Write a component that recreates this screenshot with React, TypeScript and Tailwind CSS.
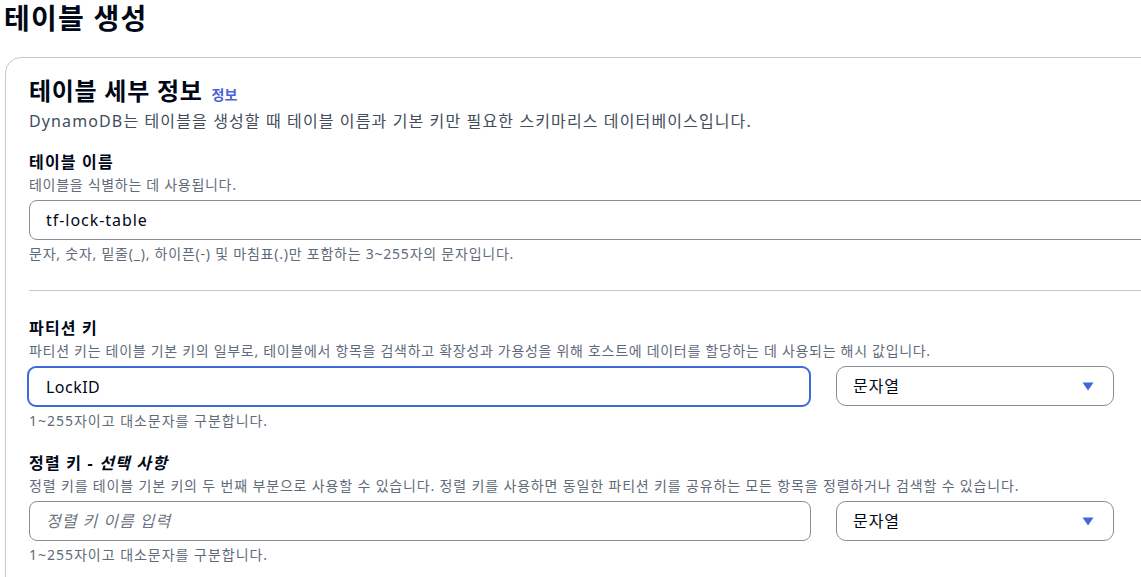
import React from 'react';

const FONT = { fontFamily: '"Noto Sans", "Noto Sans CJK KR", sans-serif' };

const Caret: React.FC = () => (
    <svg width="12" height="9" viewBox="0 0 12 9" className="shrink-0">
        <path d="M0.5 0.5 H11.5 L6 8.5 Z" fill="#3f68d8" />
    </svg>
);

const TypeSelect: React.FC = () => (
    <div className="w-[278px] h-[40px] shrink-0 rounded-[10px] border border-[#8c8c94] flex items-center justify-between pl-4 pr-[19px]">
        <span className="text-[16px] text-[#000716] tracking-[0.06em]">문자열</span>
        <Caret />
    </div>
);

const App: React.FC = () => {
    return (
        <div className="w-full h-[577px] overflow-hidden bg-white text-[#000716]" style={FONT}>
            <h1 className="pl-[4px] text-[28px] leading-[36px] font-bold tracking-[0.045em]">테이블 생성</h1>

            <div className="mt-[21px] ml-[5px] w-[1200px] h-[560px] rounded-2xl border border-[#c6c6cd] pl-[23px] pr-6 pt-[17px]">
                {/* Header */}
                <div className="flex items-baseline gap-[9px]">
                    <h2 className="text-[24px] leading-[32px] font-bold tracking-[0.03em]">테이블 세부 정보</h2>
                    <a href="#" className="text-[14px] font-bold text-[#4a62d8]">정보</a>
                </div>
                <p className="mt-[2px] text-[16px] leading-[24px] text-[#414d5c] tracking-[0.07em]">
                    DynamoDB는 테이블을 생성할 때 테이블 이름과 기본 키만 필요한 스키마리스 데이터베이스입니다.
                </p>

                {/* Table name */}
                <div className="mt-[17px]">
                    <p className="text-[16px] leading-[24px] font-bold tracking-[0.075em]">테이블 이름</p>
                    <p className="mt-[1px] text-[14px] leading-[20px] text-[#5f6b7a] tracking-[0.05em]">테이블을 식별하는 데 사용됩니다.</p>
                    <div className="mt-[5px] h-[40px] rounded-[8px] border border-[#8c8c94] flex items-center px-4">
                        <span className="text-[16px] tracking-[0.06em]">tf-lock-table</span>
                    </div>
                    <p className="mt-[4px] text-[14px] leading-[20px] text-[#5f6b7a] tracking-[0.055em]">
                        문자, 숫자, 밑줄(_), 하이픈(-) 및 마침표(.)만 포함하는 3~255자의 문자입니다.
                    </p>
                </div>

                <div className="mt-[26px] border-t border-[#c6c6cd]" />

                {/* Partition key */}
                <div className="mt-[25px]">
                    <p className="text-[16px] leading-[24px] font-bold tracking-[0.075em]">파티션 키</p>
                    <p className="mt-[1px] text-[14px] leading-[20px] text-[#5f6b7a] tracking-[0.05em]">
                        파티션 키는 테이블 기본 키의 일부로, 테이블에서 항목을 검색하고 확장성과 가용성을 위해 호스트에 데이터를 할당하는 데 사용되는 해시 값입니다.
                    </p>
                    <div className="mt-[5px] flex gap-[25px]">
                        <div className="w-[784px] h-[41px] -ml-[2px] rounded-[9px] border-2 border-[#3f68d8] flex items-center pl-[17px]">
                            <span className="text-[16px] tracking-[0.03em]">LockID</span>
                        </div>
                        <TypeSelect />
                    </div>
                    <p className="mt-[4px] text-[14px] leading-[20px] text-[#5f6b7a] tracking-[0.07em]">1~255자이고 대소문자를 구분합니다.</p>
                </div>

                {/* Sort key */}
                <div className="mt-[20px]">
                    <p className="text-[16px] leading-[24px] font-bold tracking-[0.075em]">
                        정렬 키 - <span className="italic">선택 사항</span>
                    </p>
                    <p className="mt-[1px] text-[14px] leading-[20px] text-[#5f6b7a] tracking-[0.06em]">
                        정렬 키를 테이블 기본 키의 두 번째 부분으로 사용할 수 있습니다. 정렬 키를 사용하면 동일한 파티션 키를 공유하는 모든 항목을 정렬하거나 검색할 수 있습니다.
                    </p>
                    <div className="mt-[5px] flex gap-[25px]">
                        <div className="w-[782px] h-[40px] rounded-[8px] border border-[#8c8c94] flex items-center px-4">
                            <span className="text-[16px] italic text-[#6b7480] tracking-[0.06em]">정렬 키 이름 입력</span>
                        </div>
                        <TypeSelect />
                    </div>
                    <p className="mt-[4px] text-[14px] leading-[20px] text-[#5f6b7a] tracking-[0.07em]">1~255자이고 대소문자를 구분합니다.</p>
                </div>
            </div>
        </div>
    );
};

export default App;
